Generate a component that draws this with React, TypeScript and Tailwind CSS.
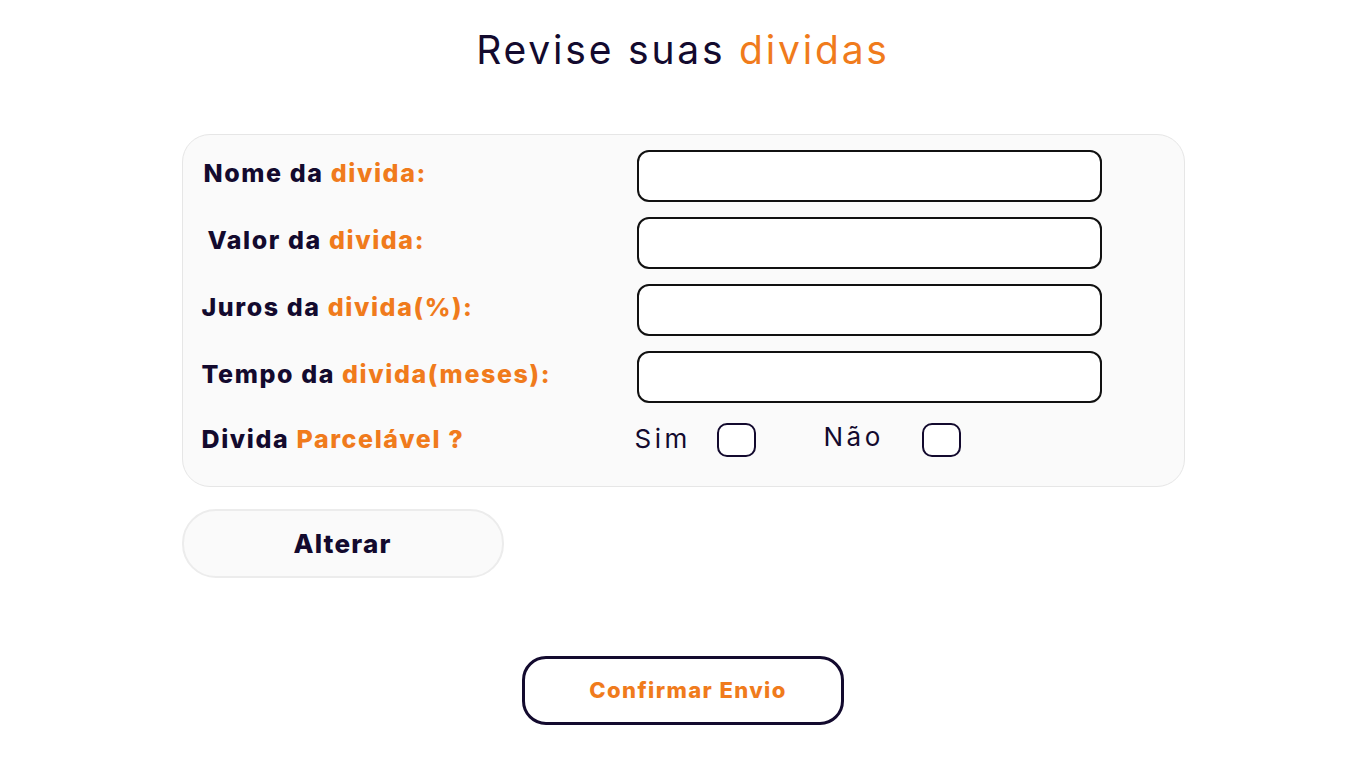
import { useState } from "react";

const fields = [
  { label: "Nome da ", accent: "divida:", offset: "pl-[21px]" },
  { label: "Valor da ", accent: "divida:", offset: "pl-[25px]" },
  { label: "Juros da ", accent: "divida(%):", offset: "pl-[19px]" },
  { label: "Tempo da ", accent: "divida(meses):", offset: "pl-[19px]" }
];

export default function App() {
  const [parcelavel, setParcelavel] = useState<"sim" | "nao" | null>(null);

  return (
    <div className="min-h-[768px] bg-white font-['Inter',sans-serif] text-[#130a2e]">
      <div className="mx-auto flex w-[1003px] flex-col items-center pt-[26px]">
        <h1 className="text-[39px] font-normal leading-[48px] tracking-[2.8px]">
          Revise suas <span className="text-[#f07b1c]">dividas</span>
        </h1>

        <div className="mt-[60px] w-full rounded-[28px] border border-[#e6e6e6] bg-[#fafafa] pb-[29px] pt-[15px]">
          <div className="flex flex-col gap-[15px]">
            {fields.map((field) => (
              <div key={field.accent + field.label} className="flex items-center">
                <div className={`w-[454px] pb-[4px] text-[25px] font-extrabold tracking-[1.6px] ${field.offset}`}>
                  {field.label}
                  <span className="text-[#f07b1c]">{field.accent}</span>
                </div>
                <input
                  type="text"
                  className="h-[52px] w-[465px] rounded-[12px] border-2 border-[#111] bg-white px-3 text-[18px] outline-none"
                />
              </div>
            ))}
          </div>

          <div className="mt-[20px] flex h-[34px] items-center">
            <div className="w-[452px] pl-[19px] text-[25px] font-extrabold tracking-[1.6px]">
              Divida <span className="text-[#f07b1c]">Parcelável ?</span>
            </div>
            <div className="flex items-center text-[26px] leading-none tracking-[3.5px]">
              <span className="w-[82px] -mt-[3px]">Sim</span>
              <button
                type="button"
                onClick={() => setParcelavel("sim")}
                className={`h-[34px] w-[39px] rounded-[10px] border-2 border-[#130a2e] ${
                  parcelavel === "sim" ? "bg-[#f07b1c]" : "bg-white"
                }`}
              />
              <span className="ml-[68px] w-[98px] -mt-[6px]">Não</span>
              <button
                type="button"
                onClick={() => setParcelavel("nao")}
                className={`h-[34px] w-[39px] rounded-[10px] border-2 border-[#130a2e] ${
                  parcelavel === "nao" ? "bg-[#f07b1c]" : "bg-white"
                }`}
              />
            </div>
          </div>
        </div>

        <div className="mt-[22px] w-full">
          <button
            type="button"
            className="h-[69px] w-[322px] rounded-[34px] border-2 border-[#ececec] bg-[#fafafa] text-[26px] font-extrabold tracking-[1.2px]"
          >
            Alterar
          </button>
        </div>

        <button
          type="button"
          className="mt-[78px] h-[69px] w-[322px] rounded-[24px] border-[3px] border-[#130a2e] bg-white pl-[10px] text-[22px] font-extrabold tracking-[1.4px] text-[#f07b1c]"
        >
          Confirmar Envio
        </button>
      </div>
    </div>
  );
}
